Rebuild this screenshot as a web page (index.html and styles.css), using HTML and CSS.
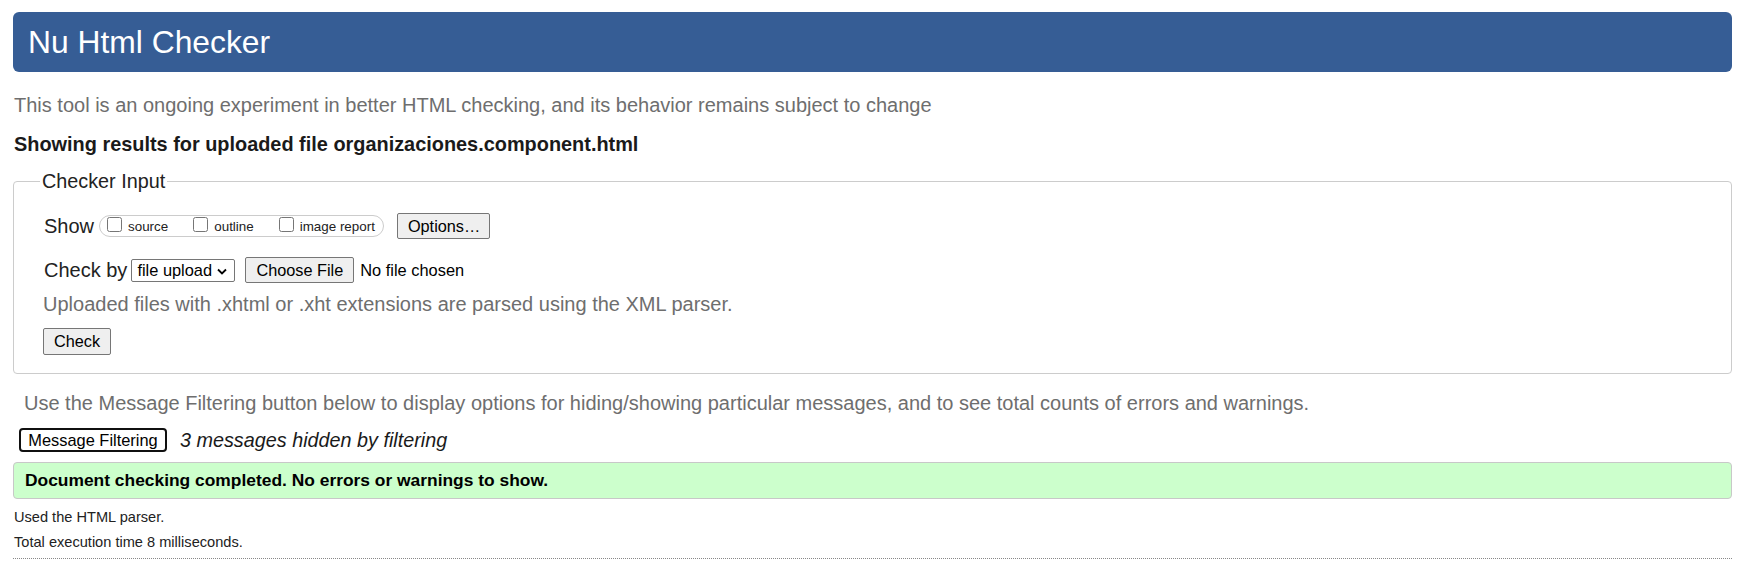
FILE: index.html
```html
<!DOCTYPE html>
<html lang="en">
<head>
<meta charset="utf-8">
<title>Showing results for uploaded file organizaciones.component.html - Nu Html Checker</title>
<link rel="stylesheet" href="styles.css">
</head>
<body>
<h1 class="title">Nu Html Checker</h1>
<p class="intro">This tool is an ongoing experiment in better HTML checking, and its behavior remains subject to change</p>
<p class="showing">Showing results for uploaded file organizaciones.component.html</p>
<form class="checker-form">
  <fieldset class="checker-input">
    <legend>Checker Input</legend>
    <div class="row show-row">
      <span class="row-label">Show</span>
      <span class="pill">
        <label class="opt"><input type="checkbox" class="cb">source</label>
        <label class="opt"><input type="checkbox" class="cb">outline</label>
        <label class="opt last"><input type="checkbox" class="cb">image report</label>
      </span>
      <button type="button" class="btn options-btn">Options…</button>
    </div>
    <div class="row checkby-row">
      <span class="row-label">Check by</span>
      <span class="select">file upload<svg class="chev" width="10" height="7" viewBox="0 0 10 7"><path d="M1 1.5 L5 5.5 L9 1.5" fill="none" stroke="#000" stroke-width="1.8"/></svg></span>
      <button type="button" class="btn choose-btn">Choose File</button>
      <span class="nofile">No file chosen</span>
    </div>
    <p class="note">Uploaded files with .xhtml or .xht extensions are parsed using the XML parser.</p>
    <div class="row submit-row">
      <button type="button" class="btn check-btn">Check</button>
    </div>
  </fieldset>
</form>
<p class="filter-help">Use the Message Filtering button below to display options for hiding/showing particular messages, and to see total counts of errors and warnings.</p>
<div class="filter-row">
  <button type="button" class="filter-btn">Message Filtering</button>
  <span class="hidden-count">3 messages hidden by filtering</span>
</div>
<p class="success">Document checking completed. No errors or warnings to show.</p>
<p class="meta">Used the HTML parser.</p>
<p class="meta">Total execution time 8 milliseconds.</p>
<div class="rule"></div>
</body>
</html>
```
FILE: styles.css
```css
html, body {
  background: #fff;
}
body {
  margin: 0;
  padding: 12px 13px 0;
  font-family: "Liberation Sans", Arial, sans-serif;
  color: #222;
}
.title {
  margin: 0;
  height: 60px;
  display: flex;
  align-items: center;
  padding: 0 15px;
  background: #365d95;
  color: #fff;
  font-weight: normal;
  font-size: 31.8px;
  border-radius: 6px;
  box-sizing: border-box;
}
.intro {
  margin: 22px 0 0 1px;
  font-size: 20px;
  line-height: 23px;
  color: #6e6e6e;
}
.showing {
  margin: 16px 0 0 1px;
  font-size: 19.9px;
  line-height: 23px;
  font-weight: bold;
  color: #1a1a1a;
}
.checker-form {
  margin: 14px 0 0;
}
.checker-input {
  margin: 0;
  padding: 20px 26px 18px 26px;
  border: 1px solid #cccccc;
  border-radius: 4px;
}
.checker-input legend {
  padding: 0 2px;
  font-size: 19.8px;
  line-height: 23px;
  color: #222;
}
.row {
  display: flex;
  align-items: center;
  height: 26px;
  padding-left: 4px;
}
.row-label {
  font-size: 20px;
  color: #222;
}
.show-row .pill {
  margin-left: 5px;
}
.pill {
  display: inline-flex;
  align-items: center;
  height: 22px;
  box-sizing: border-box;
  border: 1px solid #cccccc;
  border-radius: 11px;
  padding: 0 8px 0 7px;
  font-size: 13.4px;
  color: #222;
}
.opt {
  display: inline-flex;
  align-items: center;
  margin-right: 25px;
}
.opt.last {
  margin-right: 0;
}
.cb {
  width: 15px;
  height: 15px;
  margin: 0 6px 3px 0;
}
.btn {
  font-family: "Liberation Sans", Arial, sans-serif;
  font-size: 16.3px;
  color: #000;
  background: #efefef;
  border: 1px solid #767676;
  border-radius: 2px;
  height: 26px;
  padding: 0 10px;
  white-space: nowrap;
}
.options-btn {
  margin-left: 13px;
  width: 93px;
}
.checkby-row {
  margin-top: 18px;
}
.select {
  margin-left: 4px;
  height: 23px;
  width: 104px;
  box-sizing: border-box;
  display: inline-flex;
  align-items: center;
  justify-content: space-between;
  padding: 0 7px 0 5px;
  border: 1px solid #767676;
  border-radius: 2px;
  font-size: 16.4px;
  color: #000;
  background: #fff;
}
.chev {
  margin-top: 2px;
}
.choose-btn {
  margin-left: 10px;
  min-width: 108px;
}
.nofile {
  margin-left: 6px;
  font-size: 16.4px;
  color: #000;
}
.note {
  margin: 10px 0 0 3px;
  font-size: 20px;
  line-height: 23px;
  color: #6e6e6e;
}
.submit-row {
  margin-top: 12px;
  height: 27px;
  padding-left: 3px;
}
.check-btn {
  width: 68px;
  height: 27px;
}
.filter-help {
  margin: 18px 0 0 11px;
  font-size: 20px;
  line-height: 23px;
  color: #6e6e6e;
}
.filter-row {
  margin: 13px 0 0 6px;
  display: flex;
  align-items: center;
}
.filter-btn {
  font-family: "Liberation Sans", Arial, sans-serif;
  font-size: 16.4px;
  color: #000;
  background: #fff;
  border: 2px solid #101010;
  border-radius: 4px;
  height: 24px;
  width: 148px;
  padding: 0;
}
.hidden-count {
  margin-left: 13px;
  font-size: 19.8px;
  font-style: italic;
  color: #1a1a1a;
}
.success {
  margin: 10px 0 0;
  height: 37px;
  box-sizing: border-box;
  display: flex;
  align-items: center;
  padding: 0 11px;
  background: #ccffcc;
  border: 1px solid #c8c8c8;
  border-radius: 4px;
  font-size: 17.4px;
  font-weight: bold;
  color: #000;
}
.meta {
  margin: 7px 0 0 1px;
  font-size: 14.6px;
  line-height: 18px;
  color: #222;
}
.success + .meta {
  margin-top: 9px;
}
.rule {
  margin-top: 7px;
  border-top: 1px dotted #888;
}
```
